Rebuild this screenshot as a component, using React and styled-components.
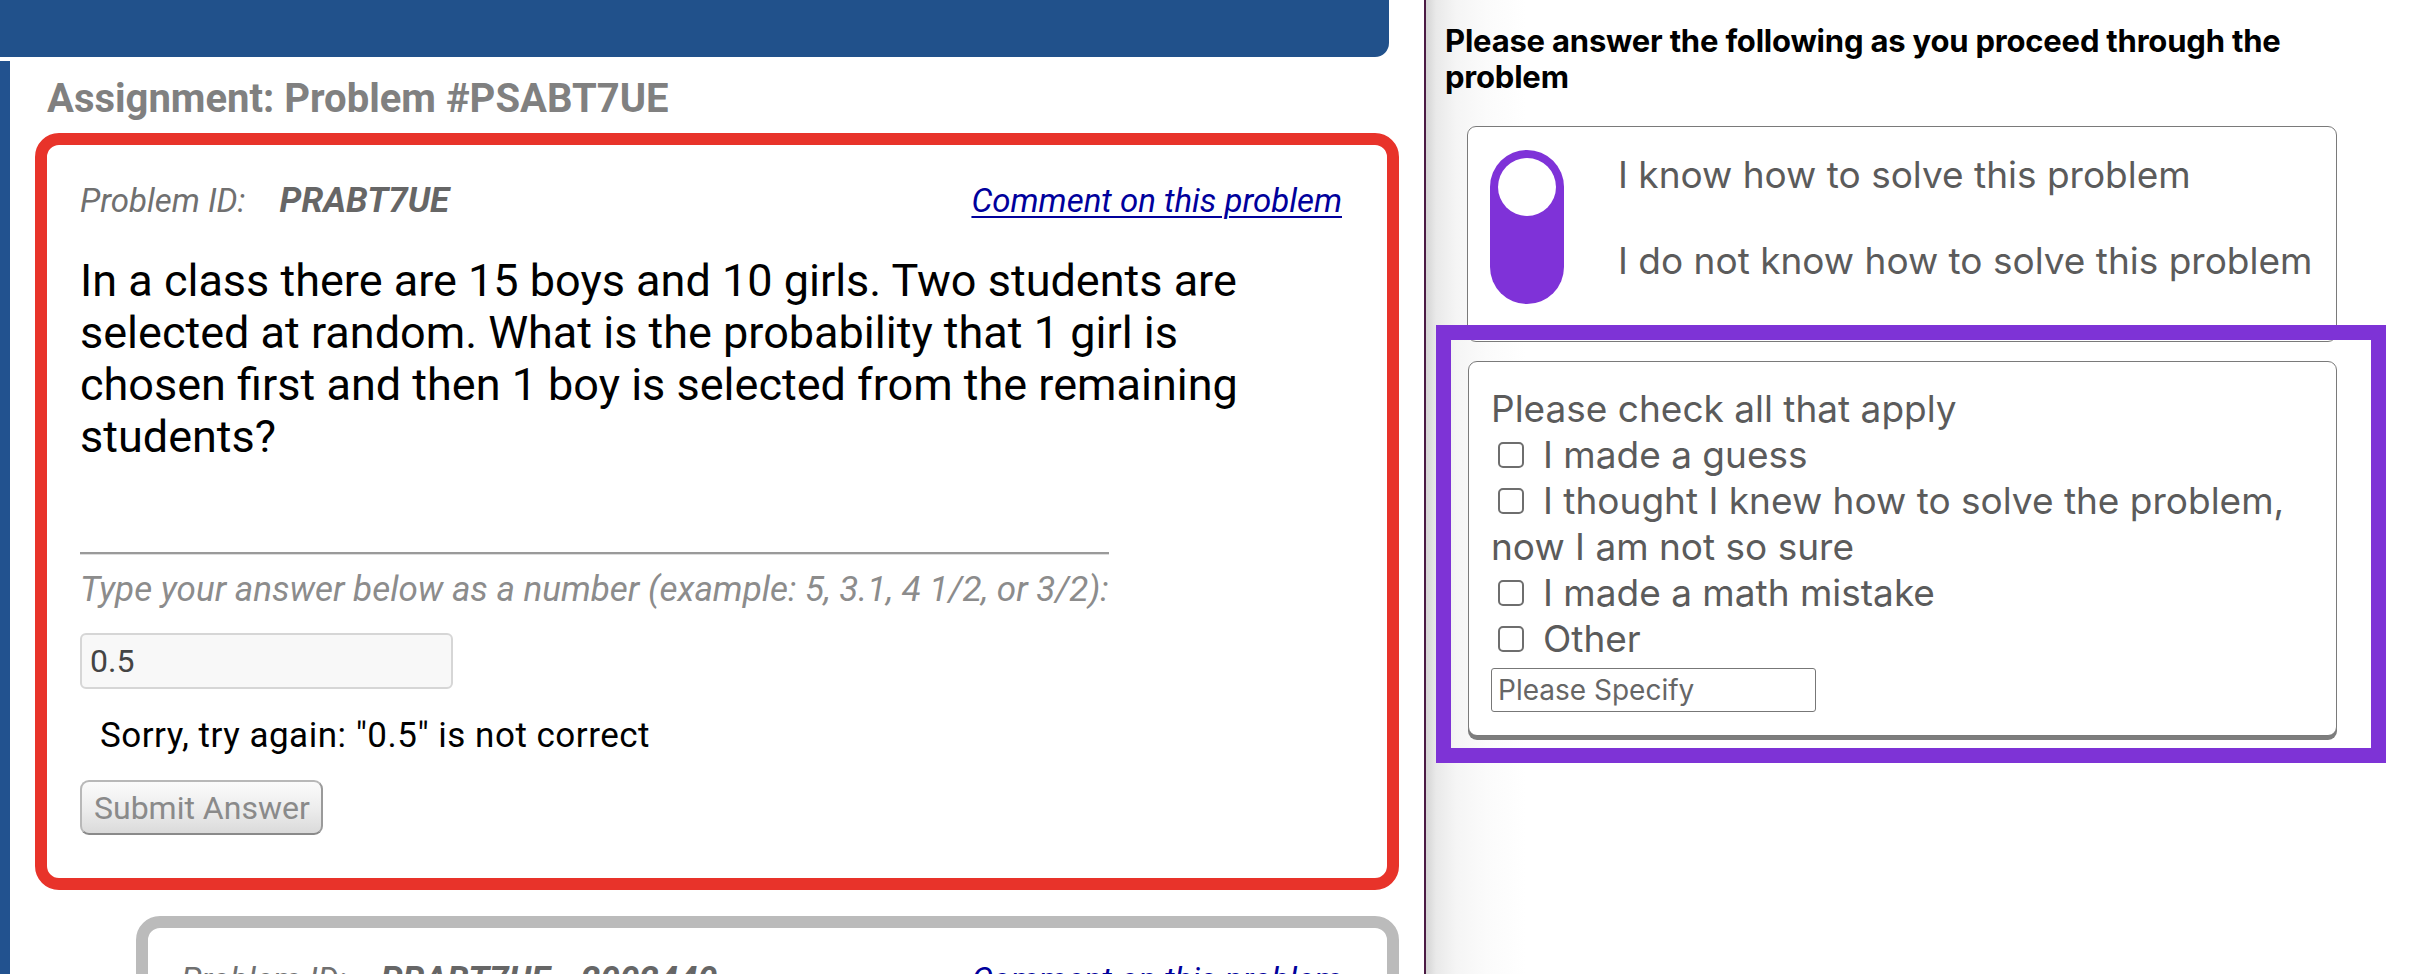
import React from "react";
import styled, { createGlobalStyle } from "styled-components";

const GlobalStyle = createGlobalStyle`
  html, body {
    margin: 0;
    padding: 0;
    background: #ffffff;
  }
  body {
    width: 2426px;
    height: 974px;
    overflow: hidden;
  }
  *, *::before, *::after {
    box-sizing: border-box;
  }
`;

const Page = styled.div`
  display: grid;
  grid-template-columns: 1424px 2px 1000px;
  height: 974px;
  overflow: hidden;
`;

/* ---------- assignment side ---------- */

const LeftPane = styled.main`
  display: flex;
  flex-direction: column;
  overflow: hidden;
  font-family: Roboto, "Liberation Sans", sans-serif;
`;

const TopBar = styled.div`
  flex: none;
  width: 1389px;
  height: 57px;
  background: #21518b;
  border-bottom-right-radius: 14px;
`;

const Workspace = styled.div`
  flex: 1;
  margin-top: 4px;
  border-left: 10px solid #22528f;
  padding: 0 25px;
  display: flex;
  flex-direction: column;
`;

const AssignmentTitle = styled.h1`
  margin: 14px 0 0 12px;
  font-size: 40px;
  line-height: 47px;
  font-weight: 700;
  color: #808080;
`;

const ProblemCard = styled.section`
  flex: none;
  margin: ${(p) => p.$gap}px 0 0 ${(p) => p.$indent}px;
  border: 12px solid ${(p) => p.$tone};
  border-radius: 24px;
  padding: ${(p) => p.$padTop}px 45px 43px 33px;
  background: #ffffff;
`;

const ProblemHeader = styled.div`
  display: flex;
  justify-content: space-between;
  align-items: baseline;
  line-height: 42px;
`;

const IdLabel = styled.span`
  font-size: 33px;
  font-style: italic;
  color: #707070;
`;

const IdValue = styled.span`
  margin-left: 34px;
  font-size: 35px;
  font-style: italic;
  font-weight: 700;
  color: #666666;
`;

const CommentLink = styled.a`
  font-size: 33px;
  font-style: italic;
  color: #00009c;
  text-decoration: underline;
  text-decoration-thickness: 2px;
  text-underline-offset: 4px;
  cursor: pointer;
`;

const Question = styled.p`
  margin: 27px 0 0;
  max-width: 1225px;
  font-size: 45px;
  line-height: 52px;
  color: #000000;
`;

const AnswerBlock = styled.div`
  margin-top: 89px;
  display: flex;
  flex-direction: column;
  align-items: flex-start;
  width: fit-content;
`;

const Rule = styled.div`
  align-self: stretch;
  border-top: 2px solid #9a9a9a;
  border-bottom: 1px solid #dddddd;
`;

const Hint = styled.div`
  margin-top: 15px;
  font-size: 35px;
  line-height: 40px;
  font-style: italic;
  color: #8c8c8c;
`;

const AnswerInput = styled.input`
  margin-top: 23px;
  width: 373px;
  height: 56px;
  padding: 0 8px;
  border: 2px solid #d6d6d6;
  border-radius: 6px;
  background: #f8f8f8;
  font-family: Roboto, "Liberation Sans", sans-serif;
  font-size: 32px;
  color: #444444;
  outline: none;
`;

const Feedback = styled.div`
  margin: 27px 0 0 20px;
  font-size: 35px;
  line-height: 40px;
  letter-spacing: 0.5px;
  color: #000000;
`;

const SubmitButton = styled.button`
  margin-top: 24px;
  width: 243px;
  height: 55px;
  padding: 0 0 0 12px;
  text-align: left;
  border: 2px solid #b8b8b8;
  border-bottom-color: #8a8a8a;
  border-right-color: #9a9a9a;
  border-radius: 9px;
  background: linear-gradient(to bottom, #fbfbfb 0%, #ececec 55%, #dadada 100%);
  font-family: Roboto, "Liberation Sans", sans-serif;
  font-size: 32px;
  color: #8a8a8a;
`;

/* ---------- survey side ---------- */

const Divider = styled.div`
  background: #4b1b44;
`;

const RightPane = styled.aside`
  padding: 23px 0 0 10px;
  background: linear-gradient(
    to right,
    #d4d4d4 0px,
    #e9e9e9 10px,
    #f5f5f5 30px,
    #fbfbfb 60px,
    #ffffff 100px
  );
  font-family: Inter, "Noto Sans", sans-serif;
  overflow: hidden;
`;

const SurveyTitle = styled.h2`
  margin: 0 0 0 9px;
  max-width: 900px;
  font-size: 31px;
  line-height: 36px;
  font-weight: 700;
  letter-spacing: -0.2px;
  color: #000000;
`;

const ToggleCard = styled.div`
  margin: 31px 0 0 31px;
  width: 870px;
  height: 216px;
  padding: 23px 0 0 22px;
  display: flex;
  gap: 54px;
  border: 1px solid #7a7a7a;
  border-radius: 9px;
  background: #ffffff;
`;

const Switch = styled.div`
  flex: none;
  width: 74px;
  height: 154px;
  padding: 8px;
  border-radius: 37px;
  background: #7f32d8;
`;

const Knob = styled.div`
  width: 58px;
  height: 58px;
  border-radius: 50%;
  background: #ffffff;
`;

const ToggleLabels = styled.div`
  padding-top: 2px;
  display: flex;
  flex-direction: column;
  gap: 41px;
  font-size: 37px;
  line-height: 45px;
  color: #5b5b5b;
`;

const HighlightFrame = styled.div`
  margin-top: -17px;
  width: 950px;
  padding: 21px 34px 12px 17px;
  border: 15px solid #7e33d6;
`;

const ChecklistCard = styled.div`
  padding: 24px 22px 23px 22px;
  border: 1px solid #7a7a7a;
  border-radius: 9px;
  box-shadow: 0 4px 0 #7d7d7d;
  background: #ffffff;
  font-size: 37px;
  line-height: 46px;
  color: #5b5b5b;
`;

const Option = styled.div``;

const Box = styled.span`
  display: inline-block;
  width: 26px;
  height: 26px;
  margin: 0 19px 0 7px;
  border: 2px solid #6e6e6e;
  border-radius: 5px;
  background: #ffffff;
`;

const SpecifyInput = styled.input`
  display: block;
  margin-top: 6px;
  width: 325px;
  height: 44px;
  padding: 0 6px;
  border: 1px solid #777777;
  border-radius: 3px;
  font-family: Inter, "Noto Sans", sans-serif;
  font-size: 28px;
  color: #333333;
  outline: none;

  &::placeholder {
    color: #666666;
  }
`;

const reasons = [
  "I made a guess",
  "I thought I knew how to solve the problem, now I am not so sure",
  "I made a math mistake",
  "Other",
];

export default function App() {
  return (
    <>
      <GlobalStyle />
      <Page>
        <LeftPane>
          <TopBar />
          <Workspace>
            <AssignmentTitle>Assignment: Problem #PSABT7UE</AssignmentTitle>

            <ProblemCard $tone="#e8332a" $gap={11} $indent={0} $padTop={35}>
              <ProblemHeader>
                <span>
                  <IdLabel>Problem ID:</IdLabel>
                  <IdValue>PRABT7UE</IdValue>
                </span>
                <CommentLink>Comment on this problem</CommentLink>
              </ProblemHeader>
              <Question>
                In a class there are 15 boys and 10 girls. Two students are
                selected at random. What is the probability that 1 girl is
                chosen first and then 1 boy is selected from the remaining
                students?
              </Question>
              <AnswerBlock>
                <Rule />
                <Hint>
                  Type your answer below as a number (example: 5, 3.1, 4 1/2, or
                  3/2):
                </Hint>
                <AnswerInput defaultValue="0.5" readOnly />
                <Feedback>Sorry, try again: "0.5" is not correct</Feedback>
                <SubmitButton type="button">Submit Answer</SubmitButton>
              </AnswerBlock>
            </ProblemCard>

            <ProblemCard $tone="#bbbbbb" $gap={26} $indent={101} $padTop={31}>
              <ProblemHeader>
                <span>
                  <IdLabel>Problem ID:</IdLabel>
                  <IdValue>PRABT7UE - 2002440</IdValue>
                </span>
                <CommentLink>Comment on this problem</CommentLink>
              </ProblemHeader>
            </ProblemCard>
          </Workspace>
        </LeftPane>

        <Divider />

        <RightPane>
          <SurveyTitle>
            Please answer the following as you proceed through the problem
          </SurveyTitle>

          <ToggleCard>
            <Switch>
              <Knob />
            </Switch>
            <ToggleLabels>
              <span>I know how to solve this problem</span>
              <span>I do not know how to solve this problem</span>
            </ToggleLabels>
          </ToggleCard>

          <HighlightFrame>
            <ChecklistCard>
              <div>Please check all that apply</div>
              {reasons.map((r) => (
                <Option key={r}>
                  <Box />
                  {r}
                </Option>
              ))}
              <SpecifyInput placeholder="Please Specify" />
            </ChecklistCard>
          </HighlightFrame>
        </RightPane>
      </Page>
    </>
  );
}
